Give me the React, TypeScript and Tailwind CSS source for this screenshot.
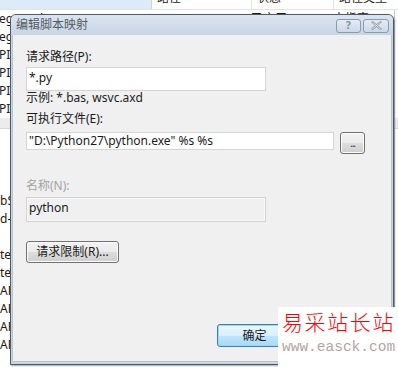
import React from "react";

const font = { fontFamily: '"Noto Sans", "Noto Sans CJK SC", sans-serif' };

function WinButton({ children, className = "", focused = false }: { children?: React.ReactNode; className?: string; focused?: boolean }) {
  return (
    <div
      className={
        "flex items-center justify-center rounded-[3px] border text-[12px] text-[#1a1a1a] " +
        (focused
          ? "border-[#3c7fb1] shadow-[inset_0_0_0_1px_#9fd7f5] bg-[linear-gradient(#eaf6fd_0%,#d9f0fc_50%,#bee6fd_51%,#a7d9f5_100%)] "
          : "border-[#707070] shadow-[inset_0_0_0_1px_#fcfcfc] bg-[linear-gradient(#f2f2f2_0%,#ebebeb_50%,#dddddd_51%,#cfcfcf_100%)] ") +
        className
      }
    >
      {children}
    </div>
  );
}

export default function App() {
  const topRows = ["egrated", "egrated", "PI-dll", "PI-dll", "PI-dll", "PI-dll"];
  const bottomRows = ["bSe", "d-Ha", "", "te", "te", "AF", "AF", "AF", "AF"];
  return (
    <div className="relative w-[398px] h-[367px] overflow-hidden bg-white" style={font}>
      {/* background list window */}
      <div className="flex flex-col w-full h-full text-[12px] text-[#1a1a1a]">
        <div className="flex h-[10px] border-b border-[#e3e3e3] overflow-hidden leading-[12px]">
          <div className="w-[152px] bg-[#dcebf7] border-r border-[#c8d8e8]" />
          <div className="w-[100px] border-r border-[#e5e5e5] pl-[5px] -mt-[8px]">路径</div>
          <div className="w-[82px] border-r border-[#e5e5e5] pl-[5px] -mt-[8px]">状态</div>
          <div className="flex-1 pl-[5px] -mt-[8px]">路径类型</div>
        </div>
        <div className="flex flex-col">
          {topRows.map((t, i) => (
            <div key={i} className="h-[18px] leading-[18px] whitespace-nowrap -ml-[1px] flex">
              <span className="w-[252px]">{t}</span>
              <span className="w-[82px]">{i === 0 ? "已启用" : ""}</span>
              <span>{i === 0 ? "未指定" : ""}</span>
            </div>
          ))}
        </div>
        <div className="h-[11px] bg-[#ececec] border-b border-[#d8d8d8]" />
        <div className="h-[63px]" />
        <div className="flex flex-col">
          {bottomRows.map((t, i) => (
            <div key={i} className="h-[18px] leading-[18px] whitespace-nowrap">
              {t}
            </div>
          ))}
        </div>
      </div>
      <div className="absolute right-[3px] top-[10px] bottom-0 w-px bg-[#c9c9c9]" />

      {/* dialog window */}
      <div className="absolute left-[10px] top-[14px] w-[384px] h-[351px] flex flex-col rounded-t-[6px] border border-[#4e5862] bg-[#c9d6e4] shadow-[1px_1px_2px_rgba(0,0,0,0.35)]">
        {/* title bar */}
        <div className="h-[20px] flex items-center justify-between pl-[5px] pr-[4px] rounded-t-[5px] bg-[linear-gradient(#dbe5f1,#c7d5e5)]">
          <span className="text-[12px] text-[#555b63] leading-[14px]">编辑脚本映射</span>
          <div className="flex gap-[2px] mt-[1px]">
            <div className="w-[25px] h-[14px] rounded-[3px] border border-[#8a9bb0] bg-[linear-gradient(#e4ecf5,#cbd8e7)] flex items-center justify-center">
              <span className="text-[10px] leading-[10px] font-bold text-[#8c97a4]" style={{ fontFamily: '"DejaVu Sans", sans-serif' }}>?</span>
            </div>
            <div className="w-[26px] h-[14px] rounded-[3px] border border-[#8a9bb0] bg-[linear-gradient(#e4ecf5,#cbd8e7)] flex items-center justify-center">
              <svg width="11" height="9" viewBox="0 0 11 9">
                <path d="M1.5 1 L9.5 8 M9.5 1 L1.5 8" stroke="#8c97a4" strokeWidth="2.2" strokeLinecap="round" fill="none" />
                <path d="M1.5 1 L9.5 8 M9.5 1 L1.5 8" stroke="#eef2f7" strokeWidth="0.8" strokeLinecap="round" fill="none" />
              </svg>
            </div>
          </div>
        </div>
        {/* body */}
        <div className="flex-1 flex flex-col mx-[1px] mb-[2px] bg-[#f0f0f0] border-x border-b border-[#b9c3ce] pl-[13px] text-[12px] text-[#1a1a1a]">
          <div className="mt-[14px] leading-[16px]">请求路径(P):</div>
          <div className="mt-[2px] w-[240px] h-[24px] bg-white border border-[#d5d5d5] pl-[2px] pt-[2px] leading-[16px]">*.py</div>
          <div className="leading-[14px] text-[#222]">示例: *.bas, wsvc.axd</div>
          <div className="mt-[7px] leading-[14px]">可执行文件(E):</div>
          <div className="mt-[6px] flex items-start">
            <div className="w-[308px] h-[18px] bg-white border border-[#d5d5d5] pl-[2px] leading-[16px] whitespace-nowrap overflow-hidden">
              "D:\Python27\python.exe" %s %s
            </div>
            <WinButton className="ml-[6px] w-[25px] h-[22px]">
              <span className="text-[10px] leading-[10px] tracking-[-1px] text-[#335]">...</span>
            </WinButton>
          </div>
          <div className="mt-[25px] leading-[14px] text-[#a3a3a3]">名称(N):</div>
          <div className="mt-[4px] w-[240px] h-[25px] bg-[#f0f0f0] border border-[#d2d2d2] shadow-[inset_0_0_0_1px_#fafafa] pl-[2px] pt-[2px] leading-[16px]">python</div>
          <WinButton className="mt-[19px] w-[93px] h-[22px]">请求限制(R)...</WinButton>
          <div className="flex-1" />
          <div className="flex justify-end gap-[6px] pr-[18px] pb-[14px]">
            <WinButton focused className="w-[75px] h-[23px]">确定</WinButton>
            <WinButton className="w-[75px] h-[23px]" />
          </div>
        </div>
      </div>

      {/* watermark */}
      <div className="absolute left-[278px] top-[307px] right-0 bottom-0 bg-white flex flex-col pl-[4px]">
        <div className="text-[21px] leading-[28px] tracking-[1.6px] text-[#ff0000] whitespace-nowrap" style={{ fontFamily: '"Noto Sans CJK SC", sans-serif', fontWeight: 200 }}>
          易采站长站
        </div>
        <div className="text-[14.5px] leading-[16px] mt-[4px] text-[#b3a5a5] whitespace-nowrap" style={{ fontFamily: '"Liberation Mono", monospace' }}>
          www.easck.com
        </div>
      </div>
    </div>
  );
}
